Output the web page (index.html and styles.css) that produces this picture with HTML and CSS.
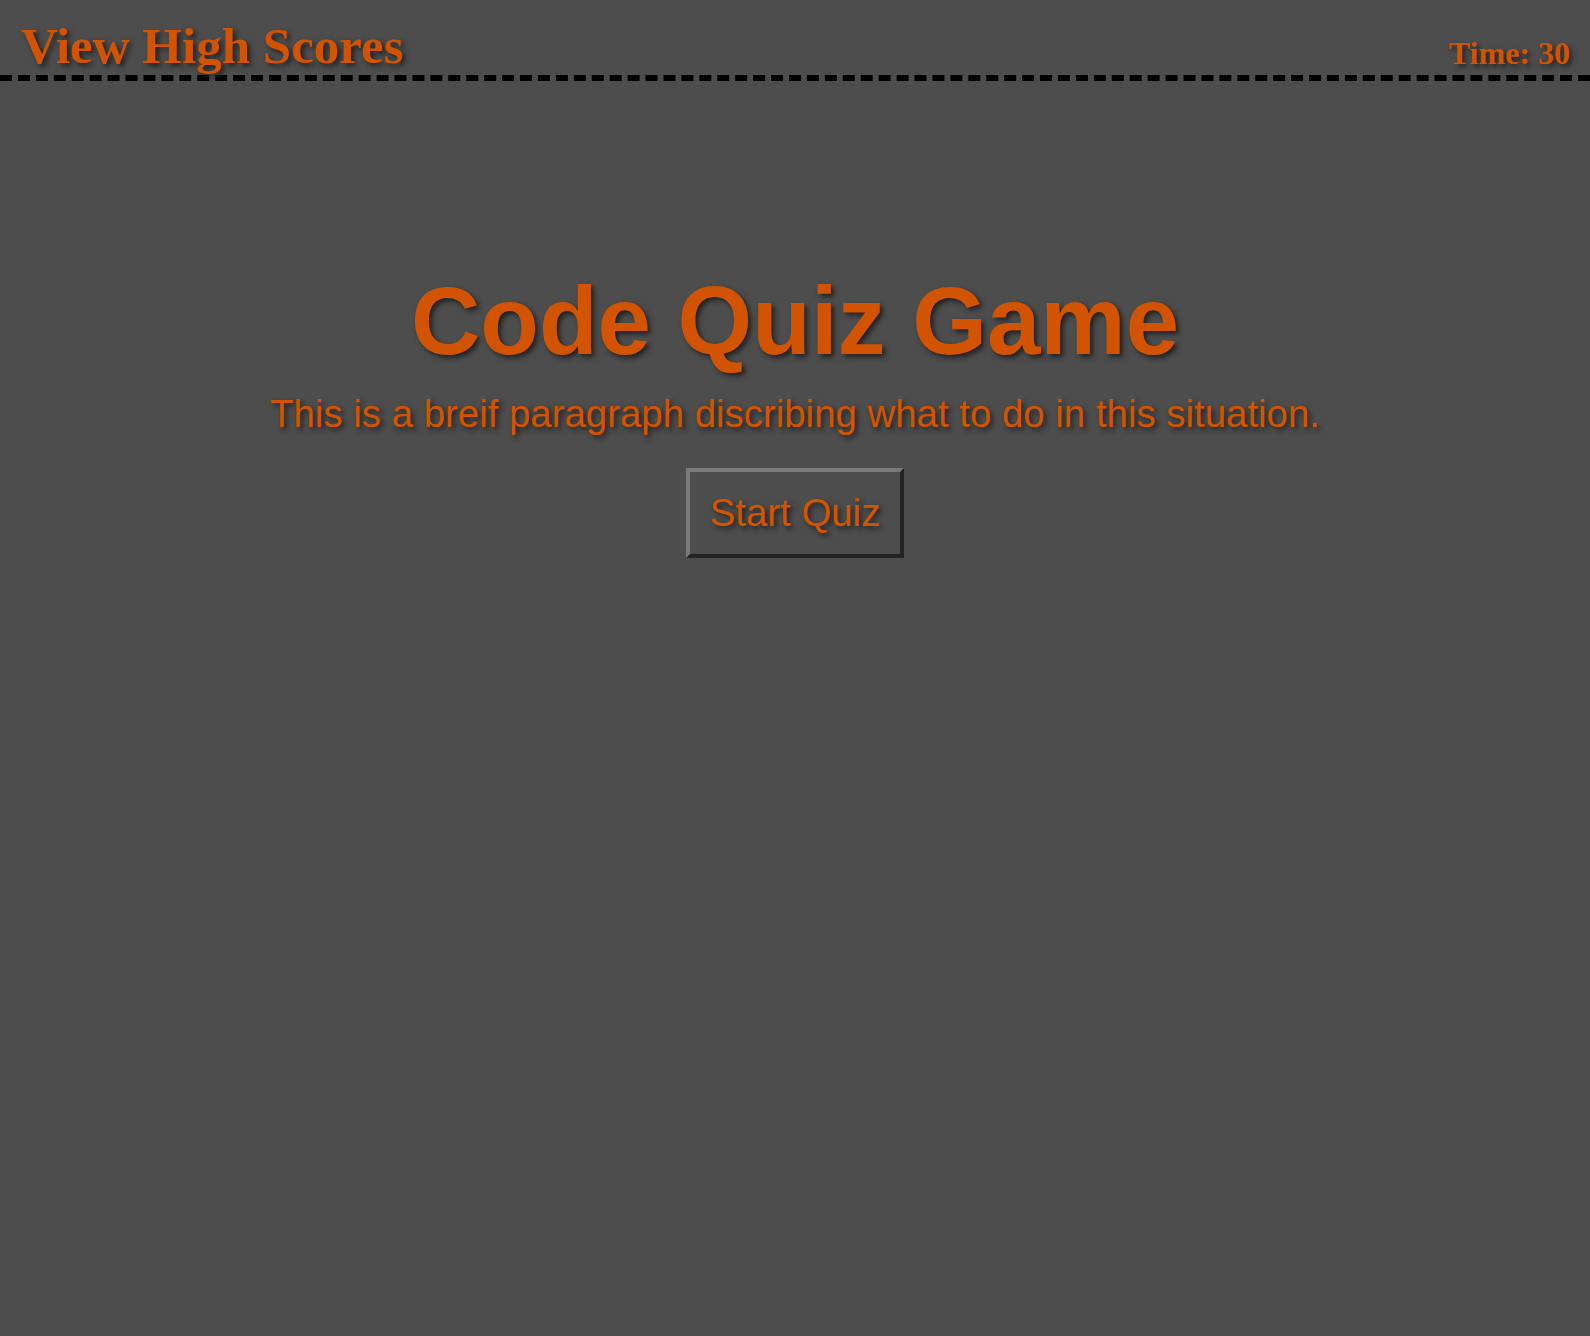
FILE: index.html
```html
<!DOCTYPE html>
<html>
<head>
<meta charset="utf-8">
<link rel="stylesheet" href="styles.css">
</head>
<body>
<header class="top">
  <a class="scores">View High Scores</a>
  <span class="timer">Time: 30</span>
</header>
<main class="intro">
  <h1 class="title">Code Quiz Game</h1>
  <p class="lead">This is a breif paragraph discribing what to do in this situation.</p>
  <button class="start">Start Quiz</button>
</main>
</body>
</html>
```
FILE: styles.css
```css
html, body {
  margin: 0;
  background: #4d4d4d;
  min-height: 100%;
}
body {
  color: #d35400;
  font-family: "Liberation Sans", Arial, sans-serif;
}
.top {
  display: flex;
  justify-content: space-between;
  align-items: flex-end;
  padding: 0 20px 6px 21px;
  border-bottom: 6px dashed #000;
  height: 69px;
  box-sizing: content-box;
}
.scores, .timer {
  font-family: "Liberation Serif", "Times New Roman", serif;
  font-weight: bold;
  text-shadow: 3px 3px 5px #222;
}
.scores {
  font-size: 51px;
  line-height: 1;
  margin-bottom: -3px;
}
.timer {
  font-size: 32px;
  line-height: 1;
}
.intro {
  display: flex;
  flex-direction: column;
  align-items: center;
  padding-top: 185px;
}
.title {
  margin: 0;
  font-size: 96px;
  font-weight: bold;
  text-shadow: 3px 3px 5px #222;
}
.lead {
  margin: 16px 0 32px;
  font-size: 38.4px;
  text-shadow: 3px 3px 5px #222;
}
.start {
  font-family: "Liberation Sans", Arial, sans-serif;
  font-size: 38.4px;
  color: #d35400;
  background: #4d4d4d;
  border: 4px solid;
  border-color: #7a7a7a #222 #222 #7a7a7a;
  padding: 19px 20px;
  text-shadow: 3px 3px 5px #222;
}
```
